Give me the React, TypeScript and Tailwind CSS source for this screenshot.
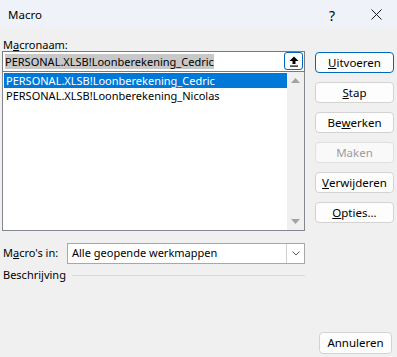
import React from "react";

const font = { fontFamily: '"Noto Sans", "Open Sans", sans-serif' };

function Btn({ children, focused, disabled }: { children: React.ReactNode; focused?: boolean; disabled?: boolean }) {
    return (
        <div
            className={
                "h-[21px] w-[79px] flex items-center justify-center rounded-[4px] text-[11.5px] leading-none " +
                (focused
                    ? "border border-[#0067c0] bg-[#fdfdfd] text-black"
                    : disabled
                    ? "border border-[#e0e0e0] bg-[#f9f9f9] text-[#9d9d9d]"
                    : "border border-[#d3d3d3] bg-[#fdfdfd] text-black")
            }
        >
            {children}
        </div>
    );
}

export default function App() {
    return (
        <div className="w-[397px] h-[357px] bg-[#f0f0f0] text-[11px] text-black overflow-hidden" style={font}>
            <div className="h-[28px] bg-[#eff3f9] flex items-center pl-[8px] pt-[2px] relative">
                <span className="text-[11.5px]">Macro</span>
                <span className="absolute left-[329px] top-[5px] text-[14px]">?</span>
                <svg className="absolute left-[371px] top-[9px]" width="11" height="11" viewBox="0 0 11 11">
                    <path d="M0.5 0.5 L10.5 10.5 M10.5 0.5 L0.5 10.5" stroke="#1a1a1a" strokeWidth="1" />
                </svg>
            </div>

            <div className="flex pl-[2px] pt-[8px]">
                <div className="w-[303px]">
                    <div className="h-[16px] pl-[1px] leading-[18px]">
                        M<span className="underline">a</span>cronaam:
                    </div>
                    <div className="h-[21px] mt-[-1px] border border-[#7a7a7a] bg-white flex items-center pl-[2px] relative">
                        <span className="bg-[#c8c8c8] leading-[15px]">PERSONAL.XLSB!Loonberekening_Cedric</span>
                        <div className="absolute right-[1px] top-[0px] w-[19px] h-[18px] rounded-[3px] border border-[#0067c0] bg-[#fdfdfd] flex items-center justify-center">
                            <svg width="10" height="11" viewBox="0 0 10 11">
                                <path d="M5 0.5 L9.5 5 L6.5 5 L6.5 8 L3.5 8 L3.5 5 L0.5 5 Z" fill="#000" />
                                <rect x="1" y="9.5" width="8" height="1.2" fill="#000" />
                            </svg>
                        </div>
                    </div>
                    <div className="h-[159px] border border-t-0 border-[#828790] bg-white flex">
                        <div className="flex-1 pt-[1px] pl-[1px]">
                            <div className="h-[15px] bg-[#0078d7] text-white leading-[15px] pl-[2px]">PERSONAL.XLSB!Loonberekening_Cedric</div>
                            <div className="h-[15px] leading-[15px] pl-[2px]">PERSONAL.XLSB!Loonberekening_Nicolas</div>
                        </div>
                        <div className="w-[17px] bg-[#f0f0f0] flex flex-col justify-between items-center py-[6px]">
                            <svg width="9" height="5" viewBox="0 0 9 5">
                                <path d="M0 5 L4.5 0 L9 5 Z" fill="#a3a3a3" />
                            </svg>
                            <svg width="9" height="5" viewBox="0 0 9 5">
                                <path d="M0 0 L4.5 5 L9 0 Z" fill="#a3a3a3" />
                            </svg>
                        </div>
                    </div>

                    <div className="flex items-center mt-[12px] h-[21px]">
                        <span className="w-[65px] pl-[1px]">
                            M<span className="underline">a</span>cro's in:
                        </span>
                        <div className="flex-1 h-[21px] border border-[#a8a8a8] bg-white flex items-center">
                            <span className="flex-1 pl-[4px]">Alle geopende werkmappen</span>
                            <div className="w-[18px] h-full border-l border-[#cfcfcf] flex items-center justify-center">
                                <svg width="8" height="5" viewBox="0 0 8 5">
                                    <path d="M0.5 0.5 L4 4 L7.5 0.5" stroke="#555" strokeWidth="1" fill="none" />
                                </svg>
                            </div>
                        </div>
                    </div>

                    <div className="flex items-center mt-[3px] h-[16px]">
                        <span className="pl-[1px]">Beschrijving</span>
                        <div className="flex-1 ml-[6px] h-px bg-[#d9d9d9]" />
                    </div>
                </div>

                <div className="ml-[10px] pt-[16px] flex flex-col gap-[9px]">
                    <Btn focused><span className="underline">U</span>itvoeren</Btn>
                    <Btn><span className="underline">S</span>tap</Btn>
                    <Btn>Be<span className="underline">w</span>erken</Btn>
                    <Btn disabled>Maken</Btn>
                    <Btn><span className="underline">V</span>erwijderen</Btn>
                    <Btn><span className="underline">O</span>pties...</Btn>
                </div>
            </div>

            <div className="flex justify-end pr-[5px] mt-[49px]">
                <div className="h-[22px] w-[73px] flex items-center justify-center rounded-[4px] border border-[#d3d3d3] bg-[#fdfdfd] text-[11.5px]">
                    Annuleren
                </div>
            </div>
        </div>
    );
}
